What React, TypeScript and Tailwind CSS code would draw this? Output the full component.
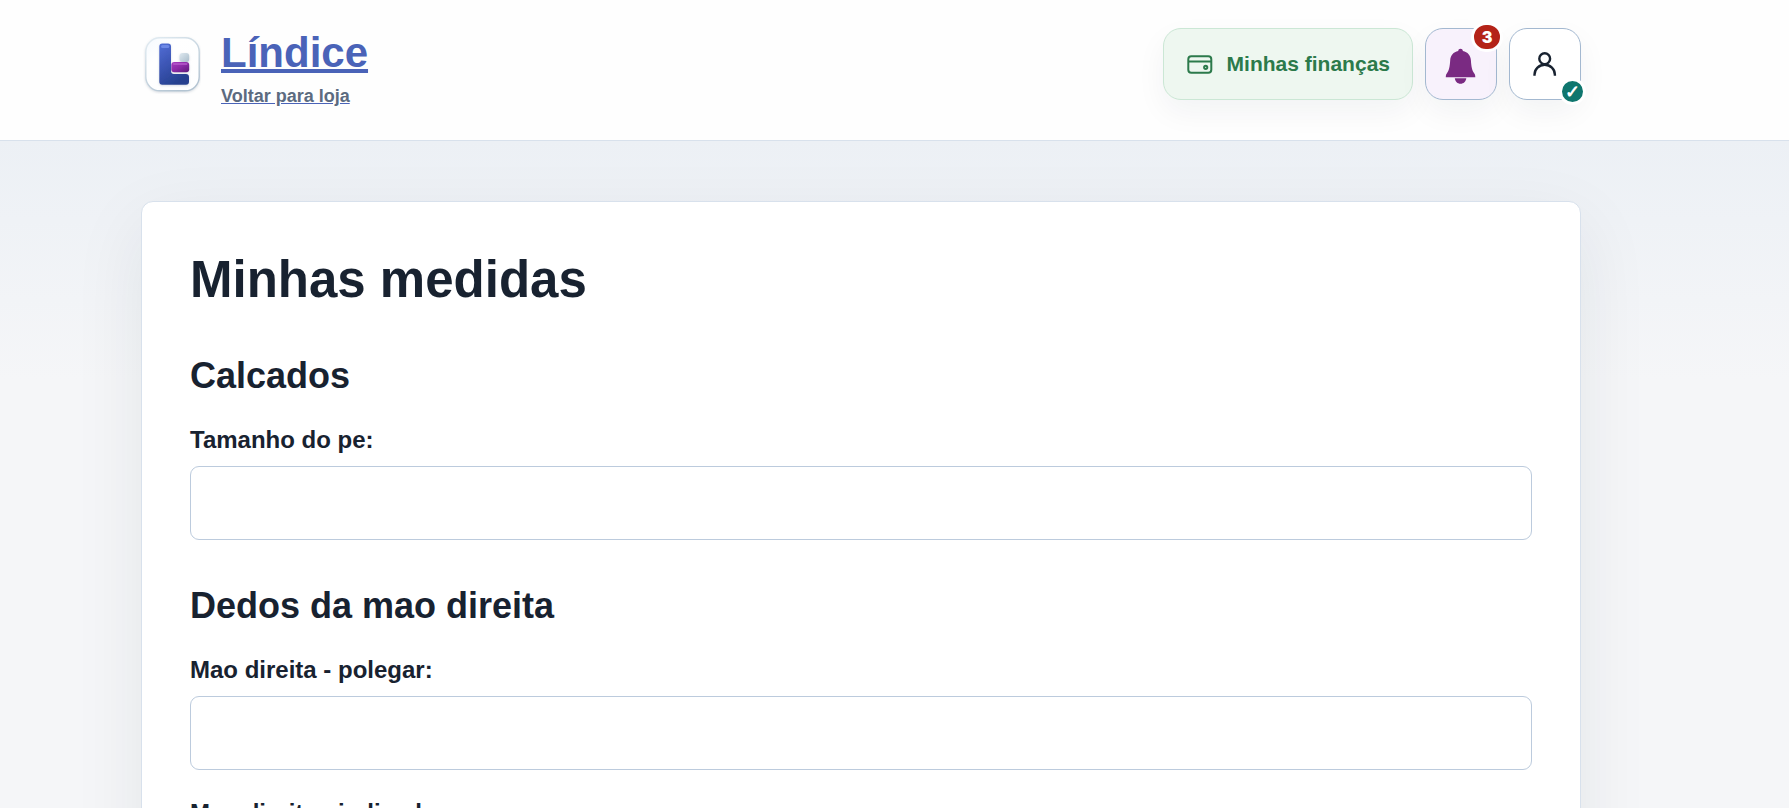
function Logo() {
  return (
    <svg width="60" height="60" viewBox="0 0 60 60" className="mt-1.5 shrink-0" aria-hidden="true">
      <defs>
        <linearGradient id="tile" x1="0" y1="0" x2="1" y2="1">
          <stop offset="0" stopColor="#f4f9fe" />
          <stop offset="0.3" stopColor="#ffffff" />
          <stop offset="1" stopColor="#fdfeff" />
        </linearGradient>
        <linearGradient id="rim" x1="0" y1="0" x2="0.6" y2="1">
          <stop offset="0" stopColor="#e3edf3" />
          <stop offset="1" stopColor="#b3c4d2" />
        </linearGradient>
        <linearGradient id="ell" x1="0" y1="0" x2="0.5" y2="1">
          <stop offset="0" stopColor="#526fd6" />
          <stop offset="0.5" stopColor="#3c55b4" />
          <stop offset="1" stopColor="#25418f" />
        </linearGradient>
        <linearGradient id="bar" x1="0" y1="0" x2="1" y2="1">
          <stop offset="0" stopColor="#a93cc0" />
          <stop offset="0.5" stopColor="#8b2ba6" />
          <stop offset="1" stopColor="#5c1a78" />
        </linearGradient>
        <linearGradient id="dot" x1="0" y1="0" x2="1" y2="1">
          <stop offset="0" stopColor="#dfe9f0" />
          <stop offset="1" stopColor="#a9bdcb" />
        </linearGradient>
        <filter id="soft" x="-20%" y="-20%" width="140%" height="140%">
          <feDropShadow dx="0" dy="1" stdDeviation="1.2" floodColor="#64748b" floodOpacity="0.25" />
        </filter>
      </defs>
      <rect x="4.800" y="3.800" width="53.400" height="53" rx="14" fill="url(#tile)" stroke="url(#rim)" strokeWidth="1.400" filter="url(#soft)" />
      <g filter="url(#soft)">
        <path d="M21.300 9.500h5.700a3 3 0 0 1 3 3V37a3 3 0 0 0 3 3h12a3 3 0 0 1 3 3v4.700a3 3 0 0 1-3 3H21.300a3 3 0 0 1-3-3V12.500a3 3 0 0 1 3-3z" fill="url(#ell)" />
        <rect x="38.500" y="19" width="9.700" height="9" rx="3" fill="url(#dot)" />
        <rect x="30.300" y="28" width="17.900" height="10.300" rx="3" fill="url(#bar)" />
      </g>
      <rect x="20" y="11" width="8.300" height="3" rx="1.500" fill="#6c88e6" />
      <rect x="32" y="29.300" width="14.500" height="1.400" rx="0.700" fill="#b65bcb" />
    </svg>
  );
}

function WalletIcon() {
  return (
    <svg width="28" height="28" viewBox="0 0 28 28" fill="none" stroke="currentColor" strokeWidth="2" aria-hidden="true">
      <rect x="2.300" y="6.300" width="23" height="16.400" rx="3" />
      <path d="M2.300 11.500h23" />
      <circle cx="19.700" cy="17.300" r="1.600" />
    </svg>
  );
}

function BellIcon() {
  return (
    <svg width="32" height="40" viewBox="0 0 32 40" fill="currentColor" aria-hidden="true">
      <path d="M15.500 4.800c1.300 0 2.200.8 2.400 2.100 4.800 1.100 7.700 4.300 8 9.300.4 7 1.300 10.300 3.100 12.800 1 1.200 1.300 2.200 1.300 4.300H.8c0-2.100.3-3.100 1.300-4.300 1.800-2.500 2.700-5.800 3.100-12.800.3-5 3.200-8.200 8-9.300.2-1.300 1-2.100 2.300-2.100z" />
      <path d="M9.800 34.200h11.500c-.5 3.300-2.700 5.500-5.800 5.500s-5.200-2.200-5.700-5.500z" />
    </svg>
  );
}

function UserIcon() {
  return (
    <svg width="28" height="28" viewBox="0 0 28 28" fill="none" stroke="currentColor" strokeWidth="2.400" aria-hidden="true">
      <circle cx="13.700" cy="8.700" r="5.400" />
      <path d="M3.500 25.700v-1a10.200 10 0 0 1 20.400 0v1" />
    </svg>
  );
}

function Field({ id, label }: { id: string; label: string }) {
  return (
    <div className="flex flex-col gap-2">
      <label htmlFor={id} className="text-2xl leading-9 font-bold">
        {label}
      </label>
      <input id={id} type="text" className="h-[74px] w-full rounded-[9px] border border-[#bccbdd] bg-white px-5 text-2xl" />
    </div>
  );
}

function Section({ title, fields }: { title: string; fields: string[] }) {
  return (
    <section>
      <h2 className="mb-6 text-4xl leading-[44px] font-bold">{title}</h2>
      <div className="flex flex-col gap-[25px]">
        {fields.map((label) => (
          <Field key={label} id={label.toLowerCase().replace(/[^a-z]+/g, "-")} label={label} />
        ))}
      </div>
    </section>
  );
}

const iconButton =
  "relative flex size-[72px] items-center justify-center rounded-[18px] border border-[#a3b8d0] shadow-[0_12px_30px_rgba(23,32,51,0.05)]";

export default function App() {
  return (
    <div className="min-h-screen bg-[#f5f6f8] bg-[linear-gradient(180deg,#ecf0f5_0,#ecf0f5_140px,#f5f6f8_380px)] font-['Liberation_Sans',Arial,sans-serif] text-[#182230]">
      <header className="border-b border-[#d8e1ec] bg-[#fefefe] pr-[67px]">
        <div className="mx-auto flex max-w-[1440px] items-start justify-between pt-7 pb-8">
          <div className="flex items-start gap-5">
            <Logo />
            <div className="flex flex-col items-start">
              <a href="#inicio" className="text-[42px] leading-[50px] font-bold text-[#4a63b8] underline decoration-4">
                Líndice
              </a>
              <a href="#loja" className="mt-1.5 text-lg leading-6 font-bold text-[#5c6b80] underline decoration-[#4a63b8]">
                Voltar para loja
              </a>
            </div>
          </div>
          <nav className="flex gap-3">
            <a
              href="#financas"
              className="flex h-[72px] items-center gap-[13px] rounded-[18px] border border-[#cbe7d5] bg-[#eef7f0] px-[22px] text-[21px] font-bold text-[#2c7a4b] shadow-[0_12px_30px_rgba(23,32,51,0.05)]"
            >
              <WalletIcon />
              Minhas finanças
            </a>
            <button type="button" aria-label="Notificações" className={`${iconButton} bg-[#f8f2fc] text-[#7a2a82]`}>
              <BellIcon />
              <span className="absolute -top-[7px] -right-[7px] flex h-[30px] w-8 items-center justify-center rounded-full border-3 border-white bg-[#b42318] font-[Inter,sans-serif] text-base font-black text-white">
                3
              </span>
            </button>
            <button type="button" aria-label="Minha conta" className={`${iconButton} bg-white`}>
              <UserIcon />
              <span className="absolute -right-1.5 -bottom-1.5 flex size-[27px] items-center justify-center rounded-full border-3 border-white bg-[#0f766e] text-lg font-bold text-white">
                ✓
              </span>
            </button>
          </nav>
        </div>
      </header>
      <main className="pt-[60px] pr-[67px] pb-[60px]">
        <div className="mx-auto max-w-[1440px] rounded-xl border border-[#d8e1ec] bg-white p-12 shadow-[0_24px_72px_rgba(23,32,51,0.08)]">
          <h1 className="text-[51px] leading-[60px] font-bold">Minhas medidas</h1>
          <form className="mt-11 flex flex-col gap-11">
            <Section title="Calcados" fields={["Tamanho do pe:"]} />
            <Section
              title="Dedos da mao direita"
              fields={["Mao direita - polegar:", "Mao direita - indicador:", "Mao direita - medio:"]}
            />
          </form>
        </div>
      </main>
    </div>
  );
}
